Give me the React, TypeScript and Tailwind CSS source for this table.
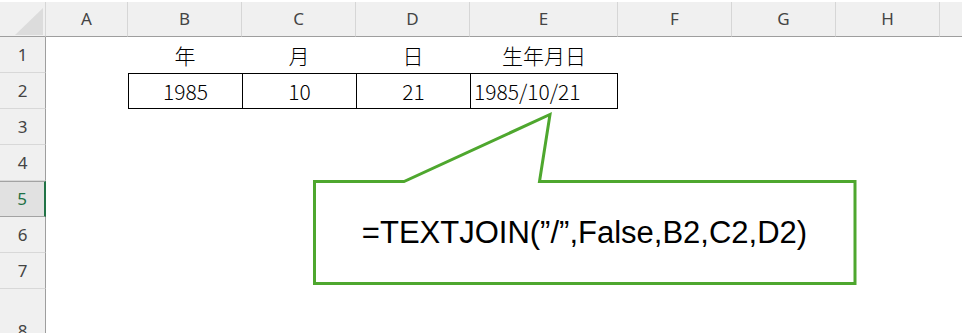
import React from "react";

const COLS = ["A", "B", "C", "D", "E", "F", "G", "H", ""];
const ROWS = [1, 2, 3, 4, 5, 6, 7, 8];
const SELECTED_ROW = 5;

const headerFont = { fontFamily: '"Noto Sans", "Liberation Sans", sans-serif' };
const cellFont = { fontFamily: '"Noto Sans CJK JP", "Noto Sans", sans-serif' };

type CellSpec = { text?: string; align?: "center" | "left"; boxed?: boolean; last?: boolean };

function cellFor(row: number, col: number): CellSpec {
  if (row === 1) {
    const labels: Record<number, string> = { 1: "年", 2: "月", 3: "日", 4: "生年月日" };
    return { text: labels[col], align: "center" };
  }
  if (row === 2) {
    const values: Record<number, CellSpec> = {
      1: { text: "1985", align: "center", boxed: true },
      2: { text: "10", align: "center", boxed: true },
      3: { text: "21", align: "center", boxed: true },
      4: { text: "1985/10/21", align: "left", boxed: true, last: true },
    };
    return values[col] ?? {};
  }
  return {};
}

function ColumnHeader({ label, last }: { label: string; last?: boolean }) {
  return (
    <div
      className={`flex items-center justify-center bg-[#f0f0f0] border-b border-b-[#9e9e9e] text-[17px] text-[#444444] ${
        last ? "" : "border-r border-r-[#d6d6d6]"
      }`}
      style={headerFont}
    >
      {label}
    </div>
  );
}

function RowHeader({ n }: { n: number }) {
  const selected = n === SELECTED_ROW;
  const tall = n === 8;
  return (
    <div
      className={`flex justify-center text-[17px] ${
        tall ? "items-end pb-[6px]" : "items-center"
      } ${
        selected
          ? "bg-[#e1e1e1] text-[#1e7145] border-r-2 border-r-[#217346] border-y border-y-[#a3a3a3]"
          : "bg-[#f0f0f0] text-[#444444] border-r border-r-[#9e9e9e] border-b border-b-[#d8d8d8]"
      }`}
      style={headerFont}
    >
      {n}
    </div>
  );
}

function Cell({ spec }: { spec: CellSpec }) {
  const align = spec.align === "left" ? "justify-start pl-[3px]" : "justify-center";
  const box = spec.boxed
    ? `border-y border-l border-black ${spec.last ? "border-r" : ""}`
    : "";
  return (
    <div
      className={`flex items-center overflow-visible whitespace-nowrap bg-white text-[21px] font-light leading-none text-black ${align} ${box}`}
      style={cellFont}
    >
      {spec.text ?? ""}
    </div>
  );
}

function Callout() {
  return (
    <div className="absolute left-0 top-0 h-[333px] w-[962px] pointer-events-none">
      <svg width="962" height="333" className="absolute left-0 top-0">
        <path
          d="M314.5 181.5 L404 181.5 L550 114.5 L539.5 181.5 L855 181.5 L855 283.5 L314.5 283.5 Z"
          fill="#ffffff"
          stroke="#4ea72e"
          strokeWidth="3"
          strokeLinejoin="miter"
        />
      </svg>
      <div
        className="absolute left-[316px] top-[183px] flex h-[99px] w-[537px] items-center justify-center text-[31px] leading-none text-black whitespace-nowrap"
        style={{ fontFamily: '"Liberation Sans", Arial, sans-serif' }}
      >
        =TEXTJOIN(”/”,False,B2,C2,D2)
      </div>
    </div>
  );
}

export default function App() {
  return (
    <div className="relative h-[333px] w-[962px] overflow-hidden bg-white pt-[2px]">
      <div className="grid grid-cols-[46px_82px_114px_114px_114px_148px_114px_104px_104px_1fr] grid-rows-[35px_repeat(7,36px)_61px]">
        {/* corner with the select-all triangle */}
        <div className="relative bg-[#f0f0f0] border-b border-b-[#9e9e9e] border-r border-r-[#d6d6d6]">
          <svg width="46" height="35" className="absolute left-0 top-0">
            <polygon points="15,33 43,33 43,6" fill="#dcdcdc" />
          </svg>
        </div>
        {COLS.map((c, i) => (
          <ColumnHeader key={`h${i}`} label={c} last={i === COLS.length - 1} />
        ))}
        {ROWS.map((r) => (
          <React.Fragment key={`r${r}`}>
            <RowHeader n={r} />
            {COLS.map((_, ci) => (
              <Cell key={`c${r}-${ci}`} spec={cellFor(r, ci)} />
            ))}
          </React.Fragment>
        ))}
      </div>
      <Callout />
    </div>
  );
}
